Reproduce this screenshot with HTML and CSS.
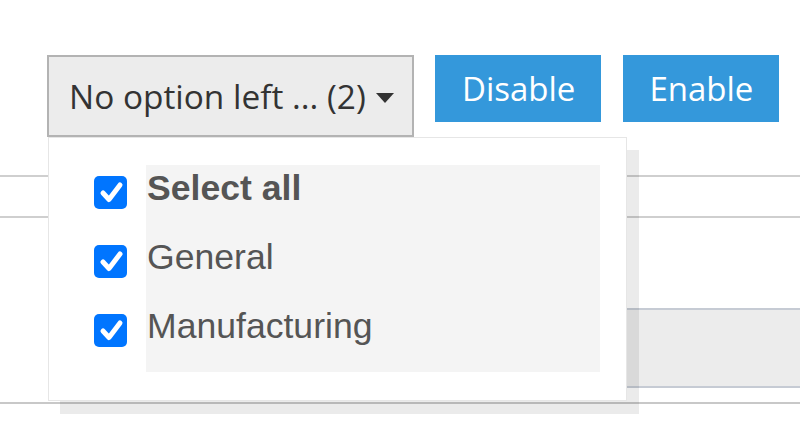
FILE: index.html
```html
<!DOCTYPE html>
<html>
<head>
<meta charset="utf-8">
<link rel="stylesheet" href="styles.css">
</head>
<body>
<div class="page">
  <div class="toolbar">
    <div class="select-wrap">
      <button class="select-btn">No option left ... (2)<span class="caret"></span></button>
      <div class="menu">
        <div class="opt">
          <span class="cb"><svg viewBox="0 0 33 33"><polyline points="9,17 15,23.5 26,9"/></svg></span>
          <span class="lbl bold">Select all</span>
        </div>
        <div class="opt">
          <span class="cb"><svg viewBox="0 0 33 33"><polyline points="9,17 15,23.5 26,9"/></svg></span>
          <span class="lbl">General</span>
        </div>
        <div class="opt">
          <span class="cb"><svg viewBox="0 0 33 33"><polyline points="9,17 15,23.5 26,9"/></svg></span>
          <span class="lbl">Manufacturing</span>
        </div>
      </div>
    </div>
    <button class="btn btn-disable">Disable</button>
    <button class="btn btn-enable">Enable</button>
  </div>
  <div class="table">
    <div class="row row-a"></div>
    <div class="row row-b"></div>
    <div class="row row-c"><div class="cell-gray"></div></div>
    <div class="row row-d"></div>
  </div>
</div>
</body>
</html>
```
FILE: styles.css
```css
html, body {
  margin: 0;
  padding: 0;
  background: #ffffff;
}
.page {
  width: 800px;
  height: 423px;
  overflow: hidden;
  position: relative;
}
.toolbar {
  display: flex;
  align-items: flex-start;
  padding: 55px 0 0 47px;
  position: relative;
  z-index: 2;
}
.select-wrap {
  position: relative;
}
.select-btn {
  box-sizing: border-box;
  width: 367px;
  height: 82px;
  margin: 0;
  padding: 0 18px 0 20px;
  border: 2px solid #b3b3b3;
  background: #ececec;
  color: #333333;
  font-family: "Open Sans", sans-serif;
  font-size: 33.4px;
  display: flex;
  align-items: center;
  white-space: nowrap;
}
.caret {
  display: inline-block;
  width: 0;
  height: 0;
  margin-left: 10px;
  margin-top: 3px;
  border-left: 9.5px solid transparent;
  border-right: 9.5px solid transparent;
  border-top: 10px solid #333333;
}
.btn {
  box-sizing: border-box;
  height: 67px;
  margin: 0;
  padding: 0 26px;
  border: none;
  background: #3498db;
  color: #ffffff;
  font-family: "Open Sans", sans-serif;
  font-size: 33px;
}
.btn-disable {
  margin-left: 21px;
  padding-left: 27px;
}
.btn-enable {
  margin-left: 22px;
}
.menu {
  position: absolute;
  left: 1px;
  top: 82px;
  box-sizing: border-box;
  width: 579px;
  height: 264px;
  padding: 27px 26px 28px 45px;
  background: #ffffff;
  border: 1px solid #e6e6e6;
  box-shadow: 12px 13px 0 rgba(0, 0, 0, 0.08);
}
.opt {
  display: flex;
  align-items: flex-start;
  height: 69px;
}
.cb {
  flex: none;
  width: 33px;
  height: 33px;
  margin-top: 11px;
  margin-right: 19px;
  border-radius: 5px;
  background: #0075ff;
  display: block;
}
.cb svg {
  display: block;
  width: 33px;
  height: 33px;
}
.cb polyline {
  fill: none;
  stroke: #ffffff;
  stroke-width: 5;
  stroke-linecap: round;
  stroke-linejoin: round;
}
.lbl {
  flex: 1;
  height: 69px;
  background: #f4f4f4;
  color: #555555;
  font-family: "Liberation Sans", Arial, sans-serif;
  font-size: 35.6px;
  line-height: 46px;
  padding-left: 1px;
}
.lbl.bold {
  font-weight: bold;
}
.table {
  margin-top: 38px;
}
.row {
  border-top: 2px solid #cfcfcf;
}
.row-a {
  height: 39px;
}
.row-b {
  height: 90px;
}
.row-c {
  border-top: none;
  display: flex;
  justify-content: flex-end;
}
.cell-gray {
  width: 200px;
  height: 76px;
  background: #ececec;
  border-top: 2px solid #c6cbd4;
  border-bottom: 2px solid #c6cbd4;
}
.row-d {
  border-top: none;
  height: 14px;
  border-bottom: 2px solid #c8c8c8;
}
```
